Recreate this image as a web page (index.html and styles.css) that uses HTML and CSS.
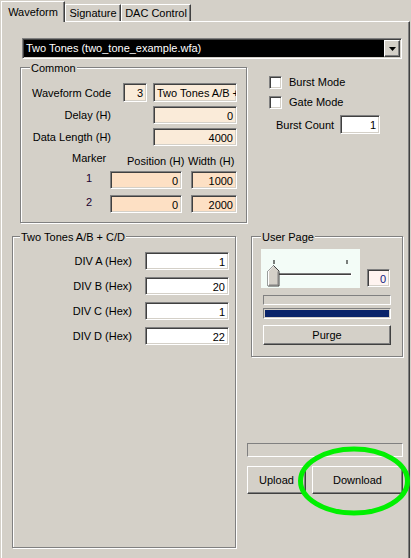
FILE: index.html
```html
<html lang="en">
  <head>
    <meta charset="UTF-8" />
    <title>Waveform</title>
    <link rel="stylesheet" href="styles.css">
  </head>
  <body>
    <div class="tabs">
      <div class="tab active">Waveform</div>
      <div class="tab sig">Signature</div>
      <div class="tab dac">DAC Control</div>
    </div>
    <div class="page">
      <div class="combo">
        <span class="combo-text">Two Tones (two_tone_example.wfa)</span>
        <span class="combo-btn">
          <svg width="7" height="4" viewBox="0 0 7 4"><polygon points="0,0 7,0 3.5,4" fill="#000"/></svg>
        </span>
      </div>

      <div class="row-top">
        <div class="group common">
          <div class="caption">Common</div>
          <div class="line first">
            <span class="lbl">Waveform Code</span>
            <span class="edit peach code">3</span>
            <span class="edit peach name left">Two Tones A/B + C/D</span>
          </div>
          <div class="line">
            <span class="lbl">Delay (H)</span>
            <span class="edit peach wide">0</span>
          </div>
          <div class="line">
            <span class="lbl">Data Length (H)</span>
            <span class="edit peach wide">4000</span>
          </div>
          <div class="marker-head">
            <span class="mh-marker">Marker</span>
            <span class="mh-pos">Position (H)</span>
            <span class="mh-width">Width (H)</span>
          </div>
          <div class="marker-row">
            <span class="num">1</span>
            <span class="edit orange pos">0</span>
            <span class="edit orange wid">1000</span>
          </div>
          <div class="marker-row second">
            <span class="num">2</span>
            <span class="edit orange pos">0</span>
            <span class="edit orange wid">2000</span>
          </div>
        </div>

        <div class="modes">
          <div class="check"><span class="box"></span>Burst Mode</div>
          <div class="check"><span class="box"></span>Gate Mode</div>
          <div class="count">
            <span class="count-lbl">Burst Count</span>
            <span class="edit white count-box">1</span>
          </div>
        </div>
      </div>

      <div class="row-bottom">
        <div class="group tones">
          <div class="caption">Two Tones A/B + C/D</div>
          <div class="div-row first"><span class="div-lbl">DIV A (Hex)</span><span class="edit white div-box">1</span></div>
          <div class="div-row"><span class="div-lbl">DIV B (Hex)</span><span class="edit white div-box">20</span></div>
          <div class="div-row"><span class="div-lbl">DIV C (Hex)</span><span class="edit white div-box">1</span></div>
          <div class="div-row"><span class="div-lbl">DIV D (Hex)</span><span class="edit white div-box">22</span></div>
        </div>

        <div class="side">
          <div class="group user">
            <div class="caption">User Page</div>
            <div class="slider-row">
              <svg class="slider" width="99" height="39" viewBox="0 0 99 39">
                <rect width="99" height="39" fill="#f3fcf7"/>
                <rect x="12.5" y="11" width="1" height="4" fill="#000"/>
                <rect x="85.5" y="11" width="1" height="4" fill="#000"/>
                <rect x="10" y="24" width="80" height="1" fill="#808080"/>
                <rect x="10" y="25" width="80" height="1" fill="#404040"/>
                <rect x="10" y="26" width="81" height="1" fill="#ffffff"/>
                <rect x="90" y="24" width="1" height="3" fill="#ffffff"/>
                <polygon points="7,22 12.5,16.5 18,22 18,37 7,37" fill="#d4d0c8" stroke="#404040" stroke-width="1"/>
                <polyline points="7.5,36.5 7.5,22 12.5,17" fill="none" stroke="#ffffff" stroke-width="1"/>
                <polyline points="17,22.5 17,36 8,36" fill="none" stroke="#808080" stroke-width="1"/>
              </svg>
              <span class="edit pink page-box">0</span>
            </div>
            <div class="bar"></div>
            <div class="bar filled"><span></span></div>
            <div class="btn purge">Purge</div>
          </div>
          <div class="status"></div>
          <div class="actions">
            <div class="btn upload">Upload</div>
            <div class="btn download">Download</div>
          </div>
        </div>
      </div>

      <svg class="mark" width="121" height="82" viewBox="0 0 121 82">
        <ellipse cx="64" cy="41" rx="53.5" ry="32" fill="none" stroke="#00f000" stroke-width="5"/>
      </svg>
    </div>
  </body>
</html>
```

FILE: styles.css
```css
body {
  margin: 0;
  width: 411px;
  height: 558px;
  overflow: hidden;
  background-color: #d4d0c8;
  font-family: "Liberation Sans", Arial, sans-serif;
  font-size: 11px;
  color: #000;
}

/* tabs */
.tabs {
  display: flex;
  align-items: flex-end;
  height: 21px;
  padding-left: 1px;
}

.tab {
  box-sizing: border-box;
  height: 17px;
  line-height: 16px;
  text-align: center;
  border-top: 1px solid #fff;
  border-left: 1px solid #fff;
  border-right: 1px solid #404040;
  box-shadow: inset -1px 0 #808080;
}

.tab.active {
  width: 64px;
  height: 21px;
  line-height: 20px;
  margin-bottom: -1px;
  background-color: #d4d0c8;
  position: relative;
  z-index: 1;
}

.tab.sig {
  width: 56px;
}

.tab.dac {
  width: 70px;
}

/* page */
.page {
  box-sizing: border-box;
  position: relative;
  width: 409px;
  height: 545px;
  margin-left: 1px;
  border-top: 1px solid #fff;
  border-left: 1px solid #fff;
  border-right: 1px solid #404040;
  box-shadow: inset -1px 0 #808080;
}

.combo {
  box-sizing: border-box;
  display: flex;
  width: 380px;
  height: 21px;
  margin: 16px 0 0 20px;
  background-color: #000;
  border: 1px solid;
  border-color: #808080 #fff #fff #808080;
  box-shadow: inset 1px 1px #404040, inset -1px -1px #d4d0c8;
  padding: 1px;
}

.combo-text {
  flex: 1;
  color: #fff;
  line-height: 17px;
  padding-left: 2px;
}

.combo-btn {
  box-sizing: border-box;
  width: 16px;
  height: 17px;
  display: flex;
  align-items: center;
  justify-content: center;
  background-color: #d4d0c8;
  border: 1px solid;
  border-color: #fff #404040 #404040 #fff;
  box-shadow: inset -1px -1px #808080;
}

/* group boxes */
.group {
  box-sizing: border-box;
  border: 1px solid #808080;
  box-shadow: inset 1px 1px #fff, 1px 1px #fff;
}

.caption {
  display: table;
  line-height: 13px;
  margin: -6px 0 0 9px;
  padding: 0 1px;
  background-color: #d4d0c8;
}

.edit {
  box-sizing: border-box;
  display: block;
  height: 19px;
  line-height: 15px;
  padding: 2px 3px 0 2px;
  text-align: right;
  white-space: nowrap;
  overflow: hidden;
  border: 1px solid;
  border-color: #808080 #fff #fff #808080;
  box-shadow: inset 1px 1px #404040, inset -1px -1px #d4d0c8;
}

.peach {
  background-color: #faebd9;
}

.orange {
  background-color: #fde0c4;
}

.white {
  background-color: #fff;
}

.pink {
  background-color: #fff4f0;
  color: #102080;
}

.left {
  text-align: left;
}

/* top row */
.row-top {
  display: flex;
  align-items: flex-start;
}

.common {
  width: 227px;
  height: 156px;
  margin: 8px 0 0 18px;
}

.line {
  display: flex;
  align-items: center;
  margin-top: 4px;
}

.line.first {
  margin-top: 8px;
}

.line .edit {
  height: 18px;
}

.line.first .edit {
  height: 19px;
}

.lbl {
  width: 90px;
  text-align: right;
}

.code {
  width: 24px;
  margin-left: 12px;
}

.name {
  width: 84px;
  margin-left: 6px;
  padding-left: 3px;
}

.wide {
  width: 84px;
  margin-left: 42px;
}

.marker-head {
  display: flex;
  align-items: flex-start;
  margin-top: 6px;
  line-height: 13px;
}

.mh-marker {
  width: 55px;
  margin-left: 51px;
}

.mh-pos {
  width: 61px;
  margin-top: 3px;
}

.mh-width {
  margin-top: 3px;
}

.marker-row {
  display: flex;
  align-items: flex-start;
  margin-top: 3px;
}

.marker-row.second {
  margin-top: 6px;
}

.marker-row .edit {
  height: 18px;
}

.num {
  width: 20px;
  margin: 1px 0 0 58px;
  line-height: 13px;
  text-align: center;
  color: #200030;
}

.pos {
  width: 72px;
  margin-left: 11px;
}

.wid {
  width: 46px;
  margin-left: 9px;
}

.modes {
  margin-top: 17px;
}

.check {
  display: flex;
  align-items: center;
  height: 13px;
  line-height: 13px;
  margin: 0 0 7px 22px;
}

.box {
  box-sizing: border-box;
  width: 13px;
  height: 13px;
  margin-right: 7px;
  background-color: #fff;
  border: 1px solid;
  border-color: #808080 #fff #fff #808080;
  box-shadow: inset 1px 1px #404040, inset -1px -1px #d4d0c8;
}

.count {
  display: flex;
  align-items: center;
  margin: -1px 0 0 29px;
}

.count-lbl {
  width: 64px;
}

.count-box {
  width: 40px;
}

/* bottom row */
.row-bottom {
  display: flex;
  align-items: flex-start;
  margin-top: 13px;
}

.tones {
  width: 224px;
  height: 312px;
  margin-left: 10px;
}

.tones .caption {
  margin-left: 7px;
}

.div-row {
  display: flex;
  align-items: center;
  margin-top: 7px;
}

.div-row.first {
  margin-top: 8px;
}

.div-lbl {
  width: 119px;
  text-align: right;
}

.div-box {
  width: 84px;
  height: 18px;
  margin-left: 13px;
}

.side {
  display: flex;
  flex-direction: column;
}

.user {
  width: 152px;
  height: 121px;
  margin-left: 15px;
}

.slider-row {
  display: flex;
  align-items: flex-end;
  margin: 5px 0 0 9px;
}

.slider {
  display: block;
}

.page-box {
  width: 23px;
  height: 18px;
  margin: 0 0 1px 7px;
}

.bar {
  box-sizing: border-box;
  width: 128px;
  height: 10px;
  margin: 7px 0 0 11px;
  border: 1px solid;
  border-color: #808080 #fff #fff #808080;
}

.bar.filled {
  height: 11px;
  margin-top: 3px;
  padding: 1px;
}

.bar.filled span {
  display: block;
  height: 100%;
  background-color: #0a246a;
}

.btn {
  box-sizing: border-box;
  display: flex;
  align-items: center;
  justify-content: center;
  background-color: #d4d0c8;
  border: 1px solid;
  border-color: #fff #404040 #404040 #fff;
  box-shadow: inset -1px -1px #808080;
}

.purge {
  width: 128px;
  height: 20px;
  margin: 6px 0 0 11px;
}

.status {
  box-sizing: border-box;
  width: 156px;
  height: 14px;
  margin: 86px 0 0 11px;
  border: 1px solid;
  border-color: #808080 #fff #fff #808080;
}

.actions {
  display: flex;
  gap: 6px;
  margin: 9px 0 0 11px;
}

.upload {
  width: 59px;
  height: 28px;
}

.download {
  width: 91px;
  height: 28px;
}

/* hand-drawn highlight on top of the download button */
.mark {
  position: absolute;
  left: 288px;
  top: 418px;
}
```
